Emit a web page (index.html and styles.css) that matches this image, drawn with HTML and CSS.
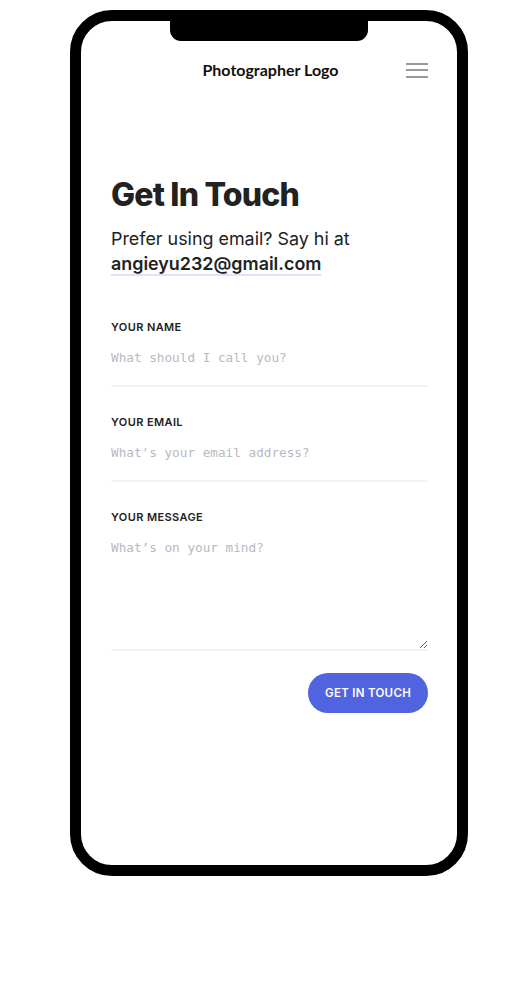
FILE: index.html
```html
<!DOCTYPE html>
<html lang="en">
<head>
<meta charset="utf-8">
<title>Get In Touch</title>
<link rel="stylesheet" href="styles.css">
</head>
<body>
<div class="phone">
  <div class="notch"></div>
  <header class="header">
    <span></span>
    <div class="logo">Photographer Logo</div>
    <button class="menu" aria-label="Menu">
      <svg width="22" height="16" viewBox="0 0 22 16"><rect x="0" y="1" width="22" height="2" fill="#9a9a9a"/><rect x="0" y="7" width="22" height="2" fill="#9a9a9a"/><rect x="0" y="14" width="22" height="2" fill="#9a9a9a"/></svg>
    </button>
  </header>
  <main class="content">
    <h1 class="title">Get In Touch</h1>
    <p class="intro">Prefer using email? Say hi at <a class="email" href="#">angieyu232@gmail.com</a></p>
    <form class="form">
      <div class="field">
        <label class="label" for="name">YOUR NAME</label>
        <input class="input" id="name" type="text" placeholder="What should I call you?">
      </div>
      <div class="field">
        <label class="label" for="mail">YOUR EMAIL</label>
        <input class="input" id="mail" type="text" placeholder="What's your email address?">
      </div>
      <div class="field field-last">
        <label class="label" for="msg">YOUR MESSAGE</label>
        <textarea class="input textarea" id="msg" placeholder="What’s on your mind?"></textarea>
      </div>
      <div class="actions">
        <button class="submit" type="button">GET IN TOUCH</button>
      </div>
    </form>
  </main>
</div>
</body>
</html>
```

FILE: styles.css
```css
* { box-sizing: border-box; }
html, body { margin: 0; padding: 0; background: #fff; }
body { font-family: Inter, "Noto Sans", sans-serif; color: #222; }

.phone {
  position: relative;
  width: 398px;
  height: 866px;
  margin: 10px 0 0 70px;
  border: 11px solid #000;
  border-radius: 42px;
  background: #fff;
  overflow: hidden;
}
.notch {
  position: absolute;
  top: 0;
  left: 89px;
  width: 198px;
  height: 20px;
  background: #000;
  border-radius: 0 0 11px 11px;
}

.header {
  height: 96px;
  display: grid;
  grid-template-columns: 1fr auto 1fr;
  align-items: center;
  padding: 0 29px 0 30px;
}
.logo {
  font-family: Lato, "Open Sans", sans-serif;
  font-weight: 700;
  font-size: 16px;
  color: #111;
  padding-left: 2px;
}
.menu {
  justify-self: end;
  border: 0;
  background: none;
  padding: 0;
  width: 22px;
  height: 16px;
  display: flex;
  margin-top: 1px;
}

.content { padding: 58px 29px 0 30px; }
.title {
  margin: 0;
  font-size: 32px;
  line-height: 40px;
  font-weight: 800;
  letter-spacing: -0.8px;
  color: #222;
}
.intro {
  margin: 11px 0 0;
  font-size: 17.9px;
  line-height: 25px;
  color: #222;
}
.email {
  color: #222;
  font-weight: 600;
  text-decoration: underline;
  text-decoration-color: #e3e0f8;
  text-decoration-thickness: 2px;
  text-underline-offset: 4px;
}

.form { margin-top: 43px; }
.field { margin-bottom: 27px; }
.field-last { margin-bottom: 0; }
.label {
  display: block;
  font-size: 11px;
  line-height: 16px;
  font-weight: 600;
  letter-spacing: 0.4px;
  color: #222;
}
.input {
  display: block;
  width: 100%;
  border: 0;
  border-bottom: 2px solid #f3f3f3;
  padding: 15px 0 19px;
  font-family: "DejaVu Sans Mono", monospace;
  font-size: 12.7px;
  line-height: 16px;
  color: #333;
  background: transparent;
  outline: none;
}
.input::placeholder { color: #b9b9c2; }
.textarea { height: 126px; resize: vertical; }

.actions {
  display: flex;
  justify-content: flex-end;
  margin-top: 22px;
}
.submit {
  width: 120px;
  height: 40px;
  border: 0;
  border-radius: 20px;
  background: #5064e0;
  color: #fff;
  font-family: Inter, sans-serif;
  font-weight: 600;
  font-size: 11.5px;
  letter-spacing: 0.3px;
}
```
